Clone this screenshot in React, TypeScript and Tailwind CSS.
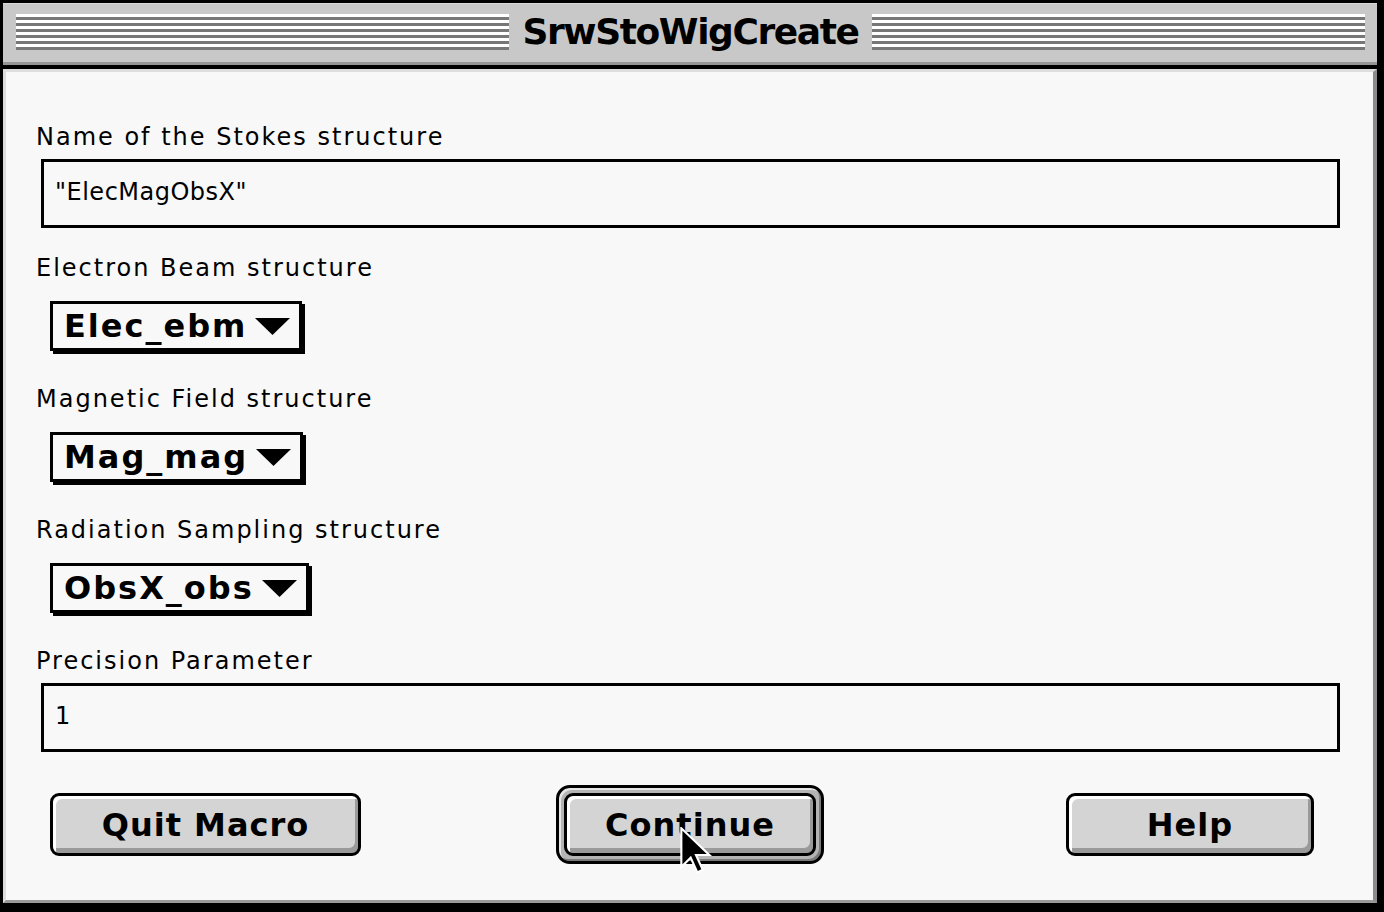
const labelFont = { fontFamily: '"DejaVu Sans", "Liberation Sans", sans-serif' };

function Stripes() {
  return (
    <div className="flex-1 h-[36px] mt-[10px] self-start bg-[repeating-linear-gradient(to_bottom,#ffffff_0px,#ffffff_3px,#777777_3px,#777777_6px)]" />
  );
}

function Field({ label, value }: { label: string; value: string }) {
  return (
    <div className="h-[131px]">
      <div className="h-[24px] leading-[24px] text-[24px] tracking-[2px] text-black whitespace-nowrap">
        {label}
      </div>
      <div className="mt-[10px] ml-[5px] h-[69px] border-[3px] border-black bg-[#f8f8f8] flex items-center pl-[11px] pb-[3px] text-[24px] tracking-[0.5px] text-black">
        {value}
      </div>
    </div>
  );
}

function Popup({ label, value }: { label: string; value: string }) {
  return (
    <div className="h-[131px]">
      <div className="h-[24px] leading-[24px] text-[24px] tracking-[2px] text-black whitespace-nowrap">
        {label}
      </div>
      <div className="mt-[21px] ml-[14px] inline-flex h-[50px] items-center border-[3px] border-black bg-[#f8f8f8] pl-[11px] pr-[9px] shadow-[3px_3px_0_0_#000]">
        <span className="text-[32px] font-bold tracking-[2px] leading-none text-black">
          {value}
        </span>
        <svg width="35" height="17" viewBox="0 0 35 17" className="ml-[8px]">
          <polygon points="0,0 35,0 17.5,17" fill="#000" />
        </svg>
      </div>
    </div>
  );
}

function MacButton({ text, width }: { text: string; width: string }) {
  return (
    <div
      className={`${width} h-[63px] rounded-[9px] border-[3px] border-black bg-[#d4d4d4] shadow-[inset_3px_3px_0_0_#ffffff,inset_-3px_-5px_0_0_#9a9a9a] flex items-center justify-center`}
    >
      <span className="text-[32px] font-bold tracking-[1px] leading-none text-black">
        {text}
      </span>
    </div>
  );
}

export default function App() {
  return (
    <div
      className="w-[1384px] h-[912px] bg-black pt-[3px] pl-[3px] pr-[7px] pb-[9px] flex flex-col"
      style={labelFont}
    >
      {/* Title bar */}
      <div className="h-[66px] shrink-0 border-b-[4px] border-black">
        <div className="h-[62px] bg-[#c8c8c8] border-b-[3px] border-[#969696] border-t-[1px] border-t-[#d8d8d8] flex px-[13px] pr-[12px]">
          <Stripes />
          <div className="px-[13px] h-full flex items-center pb-[2px]">
            <span className="text-[36px] font-bold tracking-[-1.4px] leading-none text-black">
              SrwStoWigCreate
            </span>
          </div>
          <Stripes />
        </div>
      </div>

      {/* Content */}
      <div className="relative flex-1 bg-[#f8f8f8] border-l-[3px] border-l-[#dcdcdc] border-t-[3px] border-t-[#dedede] border-r-[4px] border-r-[#8c8c8c] border-b-[3px] border-b-[#9a9a9a]">
        <div className="pl-[30px] pr-[33px] pt-[53px]">
          <Field label="Name of the Stokes structure" value={'"ElecMagObsX"'} />
          <Popup label="Electron Beam structure" value="Elec_ebm" />
          <Popup label="Magnetic Field structure" value="Mag_mag" />
          <Popup label="Radiation Sampling structure" value="ObsX_obs" />
          <Field label="Precision Parameter" value="1" />

          <div className="mt-[5px] flex items-center">
            <div className="ml-[14px]">
              <MacButton text="Quit Macro" width="w-[311px]" />
            </div>
            <div className="ml-[195px] w-[268px] h-[79px] rounded-[14px] border-[3px] border-black bg-[#b4b4b4] shadow-[inset_2px_2px_0_0_#e6e6e6,inset_-2px_-2px_0_0_#7a7a7a] p-[5px]">
              <MacButton text="Continue" width="w-[252px]" />
            </div>
            <div className="ml-[242px]">
              <MacButton text="Help" width="w-[248px]" />
            </div>
          </div>
        </div>

        {/* mouse pointer */}
        <svg
          width="32"
          height="48"
          viewBox="0 0 12 18"
          className="absolute left-[674px] top-[755px]"
        >
          <polygon
            points="0.5,0.5 0.5,15 4,11.5 6.5,17 8.5,16 6,10.5 11,10.5"
            fill="#000"
            stroke="#fff"
            strokeWidth="0.8"
          />
        </svg>
      </div>
    </div>
  );
}
